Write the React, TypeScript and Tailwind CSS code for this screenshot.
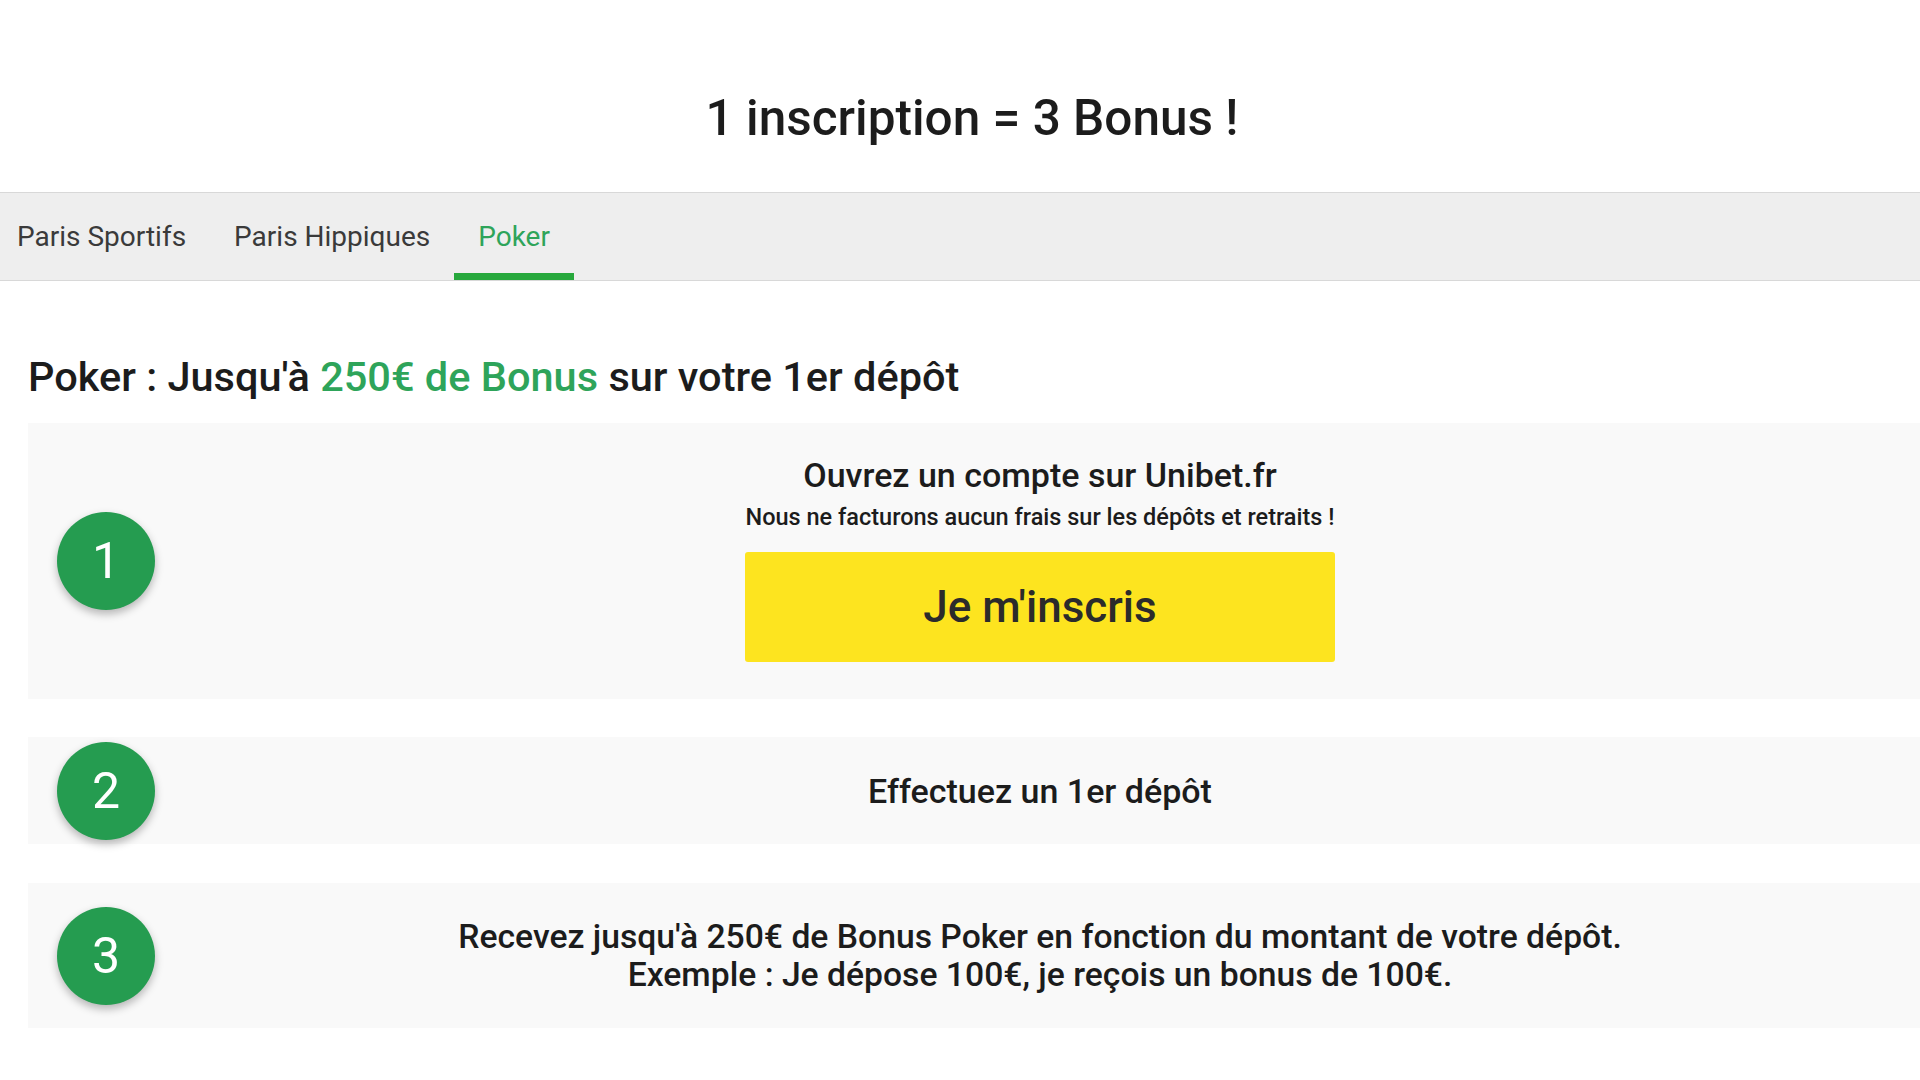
import React from 'react';

const tabs = [
    { label: 'Paris Sportifs', active: false },
    { label: 'Paris Hippiques', active: false },
    { label: 'Poker', active: true },
];

function StepBadge({ n }: { n: number }) {
    return (
        <div className="w-[98px] h-[98px] shrink-0 mr-[5px] rounded-full bg-[#259c50] shadow-[0_4px_8px_rgba(0,0,0,0.28)] flex items-center justify-center">
            <span className="text-white text-[50px] leading-none font-normal">{n}</span>
        </div>
    );
}

export default function App() {
    return (
        <div className="min-h-screen bg-white text-[#1c1c1c] font-['Roboto','Liberation_Sans',sans-serif]">
            {/* Header */}
            <div className="h-[192px] pt-[90px] flex justify-center">
                <h1 className="text-[49.5px] leading-[56px] font-medium pl-[24px]">1 inscription = 3 Bonus !</h1>
            </div>

            {/* Tabs */}
            <nav className="h-[89px] bg-[#eeeeee] border-y border-[#d8d8d8] flex items-stretch">
                {tabs.map((tab, i) => (
                    <button
                        key={tab.label}
                        className={`flex items-center pt-[7px] border-b-[7px] text-[28px] ${i === 0 ? 'pl-[17px] pr-6' : 'px-6'} ${tab.active
                            ? 'border-[#27a83c] text-[#2ea45a]'
                            : 'border-transparent text-[#3a3a3a]'
                            }`}
                    >
                        {tab.label}
                    </button>
                ))}
            </nav>

            {/* Content */}
            <main className="pt-[72px] pl-[28px]">
                <h2 className="text-[41.5px] leading-[48px] font-medium">
                    Poker : Jusqu'à <span className="text-[#2ea45a]">250€ de Bonus</span> sur votre 1er dépôt
                </h2>

                {/* Step 1 */}
                <section className="mt-[22px] h-[276px] bg-[#f9f9f9] pl-[29px] flex items-center">
                    <StepBadge n={1} />
                    <div className="flex-1 h-full flex flex-col items-center pt-[32px]">
                        <p className="text-[34px] leading-[40px] font-medium">Ouvrez un compte sur Unibet.fr</p>
                        <p className="mt-[8px] text-[23.5px] leading-[28px] font-medium">
                            Nous ne facturons aucun frais sur les dépôts et retraits !
                        </p>
                        <button className="mt-[21px] w-[590px] h-[110px] rounded-[3px] bg-[#fde41f] text-[44px] font-medium text-[#2b2b2b]">
                            Je m'inscris
                        </button>
                    </div>
                </section>

                {/* Step 2 */}
                <section className="mt-[38px] h-[107px] bg-[#f9f9f9] pl-[29px] flex items-center">
                    <StepBadge n={2} />
                    <p className="flex-1 text-center text-[34px] leading-[40px] font-medium">Effectuez un 1er dépôt</p>
                </section>

                {/* Step 3 */}
                <section className="mt-[39px] h-[145px] bg-[#f9f9f9] pl-[29px] flex items-center">
                    <StepBadge n={3} />
                    <p className="flex-1 text-center text-[33.7px] leading-[38px] font-medium">
                        Recevez jusqu'à 250€ de Bonus Poker en fonction du montant de votre dépôt.
                        <br />
                        Exemple : Je dépose 100€, je reçois un bonus de 100€.
                    </p>
                </section>
            </main>
        </div>
    );
}
